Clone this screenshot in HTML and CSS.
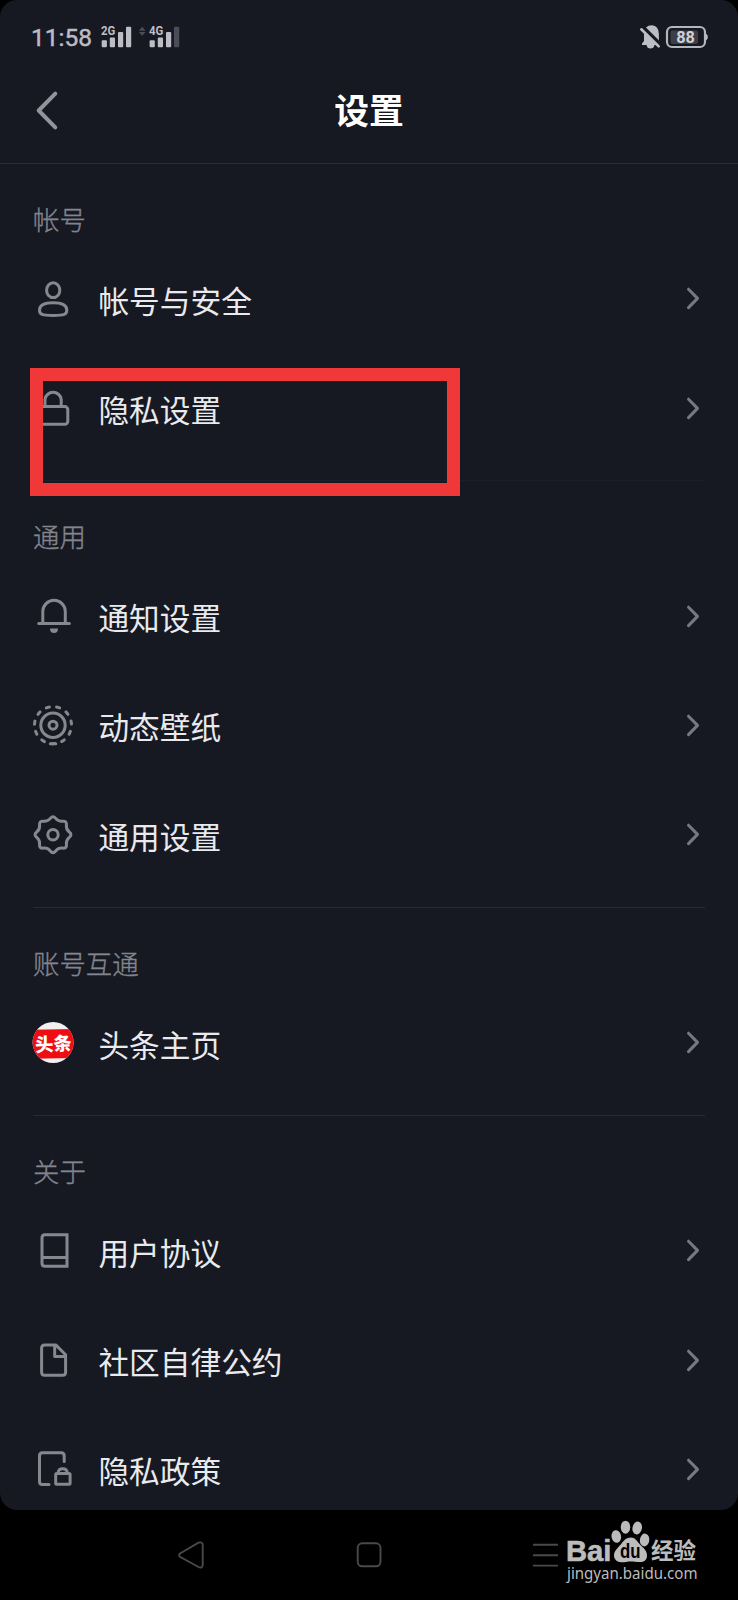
FILE: index.html
```html
<!DOCTYPE html>
<html lang="zh-CN">
<head>
<meta charset="utf-8">
<title>设置</title>
<link rel="stylesheet" href="styles.css">
</head>
<body>
<svg class="defs" width="0" height="0">
  <symbol id="chevron" viewBox="0 0 20 28"><path d="M3.5 4.2 12.5 13.4 3.5 22.6"/></symbol>
</svg>
<div class="phone">
  <div class="screen">
    <div class="status">
      <span class="clock">11:58</span>
      <svg class="signal" width="84" height="26" viewBox="99 24 84 26">
        <g class="solid">
          <rect x="101.7" y="40.3" width="5.2" height="7" rx="1"/><rect x="109.8" y="37.5" width="5.2" height="9.8" rx="1"/><rect x="118" y="32" width="5.2" height="15.3" rx="1"/><rect x="126" y="26.7" width="5.2" height="20.6" rx="1"/>
          <rect x="149.6" y="40.3" width="5.2" height="7" rx="1"/><rect x="157.8" y="37.5" width="5.2" height="9.8" rx="1"/><rect x="166" y="32" width="5.2" height="15.3" rx="1"/>
          <text x="101" y="35.3" textLength="14.3" lengthAdjust="spacingAndGlyphs">2G</text>
          <text x="149" y="35.3" textLength="14.3" lengthAdjust="spacingAndGlyphs">4G</text>
        </g>
        <g class="dim"><rect x="174" y="26.7" width="5.2" height="20.6" rx="1"/><path d="M138.8 30.7 142.2 26.8 145.6 30.7ZM138.8 32 142.2 35.8 145.6 32Z"/></g>
      </svg>
      <svg class="power" width="70" height="28" viewBox="638 23 70 28">
        <path class="solid" d="M642 45V43.5L644 41V34Q644 25.5 652 25.3Q658.7 25.8 658.9 34V41L661 44V45H654.5Q653.8 48.5 650.5 48.5T646.5 45Z"/>
        <path class="slash-gap" d="M642 26 661 45"/>
        <path class="slash" d="M641.3 29.3 658.7 46.4"/>
        <rect class="cell" x="667" y="27" width="38" height="20" rx="5"/>
        <path class="solid" d="M706 34h.5q1.3 1 1.3 3t-1.3 3H706z"/>
        <rect class="charge" x="670.5" y="30.5" width="27.5" height="13.5" rx="2"/>
        <text class="percent" x="676.2" y="43" textLength="18.7" lengthAdjust="spacingAndGlyphs">88</text>
      </svg>
    </div>
    <header class="titlebar">
      <svg class="back" width="26" height="42" viewBox="34 90 26 42"><path d="M55.3 93.7 38.7 110.5 55.3 127.3"/></svg>
      <h1>设置</h1>
    </header>
    <main>
      <section class="group faint">
        <h2>帐号</h2>
        <div class="row">
          <svg class="icon" viewBox="0 0 44 44"><ellipse cx="22.2" cy="13.2" rx="6.6" ry="7.4"/><path d="M22.2 25.8C28 25.8 35.8 27 35.8 33.2C35.8 37.5 33.5 38.5 22.2 38.5S8.5 37.5 8.5 33.2C8.5 27 16.4 25.8 22.2 25.8Z"/></svg>
          <span>帐号与安全</span><svg class="arrow"><use href="#chevron"/></svg>
        </div>
        <div class="row">
          <svg class="icon" viewBox="0 0 44 44"><path d="M14 19V12.2A8.2 8.2 0 0 1 30.2 12.2V19"/><rect x="8" y="19.6" width="28.8" height="17.7" rx="3"/></svg>
          <span>隐私设置</span><svg class="arrow"><use href="#chevron"/></svg>
          <div class="highlight"></div>
        </div>
      </section>
      <section class="group">
        <h2>通用</h2>
        <div class="row">
          <svg class="icon" viewBox="0 0 44 44"><path d="M7.7 28.6H38.4M11.8 28V16.6A11.2 11.2 0 0 1 34.3 16.6V28"/><path class="fill" d="M19 33.5H27Q27 38 23 38T19 33.5Z"/></svg>
          <span>通知设置</span><svg class="arrow"><use href="#chevron"/></svg>
        </div>
        <div class="row">
          <svg class="icon" viewBox="0 0 44 44"><circle cx="22" cy="21.2" r="12.2"/><circle cx="22" cy="21.2" r="4"/><circle class="dashes" cx="22" cy="21.2" r="18.5" pathLength="110" transform="rotate(85 22 21.2)"/><path d="M19.3 39.7H24.8"/></svg>
          <span>动态壁纸</span><svg class="arrow"><use href="#chevron"/></svg>
        </div>
        <div class="row">
          <svg class="icon" viewBox="-22 -21.7 44 44"><path d="M-2.68-16.27Q0-19.6 2.68-16.27Q5.36-12.93 9.63-13.41Q13.9-13.9 13.41-9.63Q12.93-5.36 16.27-2.68Q19.6 0 16.27 2.68Q12.93 5.36 13.41 9.63Q13.9 13.9 9.63 13.41Q5.36 12.93 2.68 16.27Q0 19.6-2.68 16.27Q-5.36 12.93-9.63 13.41Q-13.9 13.9-13.41 9.63Q-12.93 5.36-16.27 2.68Q-19.6 0-16.27-2.68Q-12.93-5.36-13.41-9.63Q-13.9-13.9-9.63-13.41Q-5.36-12.93-2.68-16.27Z"/><circle r="5.2"/></svg>
          <span>通用设置</span><svg class="arrow"><use href="#chevron"/></svg>
        </div>
      </section>
      <section class="group">
        <h2>账号互通</h2>
        <div class="row">
          <svg class="icon" viewBox="0 0 44 44"><clipPath id="disc"><circle cx="22.1" cy="21.5" r="20.5"/></clipPath><g clip-path="url(#disc)"><rect class="paper" width="44" height="44"/><rect class="red" y="8.3" width="44" height="29" transform="rotate(-1 22 22)"/></g><text class="logo" x="4" y="29.8" textLength="36.5" lengthAdjust="spacingAndGlyphs" transform="rotate(-3 22 22)">头条</text></svg>
          <span>头条主页</span><svg class="arrow"><use href="#chevron"/></svg>
        </div>
      </section>
      <section class="group last">
        <h2>关于</h2>
        <div class="row">
          <svg class="icon" viewBox="0 0 44 44"><path class="miter" d="M14 5.8H36V37.3H14Q11 37.3 11 34.3V8.8Q11 5.8 14 5.8ZM11.5 28.6H35.5"/></svg>
          <span>用户协议</span><svg class="arrow"><use href="#chevron"/></svg>
        </div>
        <div class="row">
          <svg class="icon" viewBox="0 0 44 44"><path d="M13.6 6.1H25L34.6 15.7V33.2Q34.6 36.3 31.6 36.3H13.6Q10.6 36.3 10.6 33.2V9.1Q10.6 6.1 13.6 6.1ZM23.7 6.7V17.4H34.2"/></svg>
          <span>社区自律公约</span><svg class="arrow"><use href="#chevron"/></svg>
        </div>
        <div class="row">
          <svg class="icon" viewBox="0 0 44 44"><path d="M18 36.4H11.5Q8.5 36.4 8.5 33.4V7.8Q8.5 4.8 11.5 4.8H30.2Q33.2 4.8 33.2 7.8V13.6M27.2 25Q27.2 20.8 31.7 20.8T36.2 25"/><rect x="24.7" y="25.4" width="14.4" height="10.8" rx="1"/></svg>
          <span>隐私政策</span><svg class="arrow"><use href="#chevron"/></svg>
        </div>
      </section>
    </main>
  </div>
  <nav class="navbar">
    <svg viewBox="0 1510 738 90">
      <path d="M180 1553.5 198.5 1542.7Q202.5 1541.5 202.7 1545V1565Q202.3 1568.7 198.5 1567L180 1556.8Q178.3 1555 180 1553.5Z"/>
      <rect x="357.7" y="1543.3" width="22.8" height="23" rx="4.5"/>
      <path d="M533 1544.8H558M533 1555.2H558M533 1565.6H558"/>
    </svg>
    <div class="watermark">
      <svg width="140" height="72" viewBox="562 1518 140 72">
        <ellipse cx="616.3" cy="1536.5" rx="4.8" ry="6.4" transform="rotate(-10 616.3 1536.5)"/><ellipse cx="625.5" cy="1527.2" rx="4.7" ry="6.5"/><ellipse cx="637.2" cy="1528" rx="4.7" ry="6.5" transform="rotate(12 637.2 1528)"/><ellipse cx="644.6" cy="1540" rx="4.7" ry="6.4" transform="rotate(8 644.6 1540)"/>
        <path d="M631 1537.5C635 1537.5 637 1541 640 1544.5C644 1548.5 647.3 1551 647 1556C646.8 1560.5 643.5 1562.3 639.5 1562.1C636 1562 634 1561.5 630.5 1561.5S624 1562.5 621 1562.2C616.5 1562 614 1559 614 1555.5C614 1550.5 618.5 1547.5 621.5 1543.5C624 1540.3 626.5 1537.5 631 1537.5Z"/>
        <text class="brand" x="566" y="1561.3" textLength="45.5" lengthAdjust="spacingAndGlyphs">Bai</text>
        <text class="du" x="620" y="1558.3" textLength="20.5" lengthAdjust="spacingAndGlyphs">du</text>
        <text class="brand-cn" x="651" y="1559.3" textLength="45" lengthAdjust="spacingAndGlyphs">经验</text>
        <text class="site" x="567" y="1578.8" textLength="130.5" lengthAdjust="spacingAndGlyphs">jingyan.baidu.com</text>
      </svg>
    </div>
  </nav>
</div>
</body>
</html>
```
FILE: styles.css
```css
* { box-sizing: border-box; }
body { margin: 0; background: #000; font-family: "Noto Sans CJK SC", sans-serif; }
svg { display: block; flex: none; overflow: visible; }
.defs { position: absolute; }
.phone { width: 738px; height: 1600px; display: flex; flex-direction: column; overflow: hidden; }
.screen { height: 1510px; background: #161822; border-radius: 17px; overflow: hidden; }

.status { height: 74px; padding: 0 30px 0 31px; display: flex; align-items: center; }
.clock { width: 68px; padding-top: 2px; color: #bbbcc3; font: 400 24.5px/28px Roboto, sans-serif; -webkit-text-stroke: .5px #bbbcc3; }
.power { margin-left: auto; }
.solid { fill: #bdbec5; }
.solid text { font: 700 12.5px Roboto, sans-serif; }
.dim { fill: #4b4c57; }
.slash-gap { stroke: #161822; stroke-width: 3.5; }
.slash { stroke: #bdbec5; stroke-width: 2.6; stroke-linecap: round; }
.cell { fill: none; stroke: #b4b6bd; stroke-width: 2.2; }
.charge { fill: #3d3f48; }
.percent { fill: #d0d1d6; font: 700 17px Roboto, sans-serif; }

.titlebar { height: 90px; display: grid; grid-template-columns: 1fr auto 1fr; align-items: center; padding: 0 34px 16px; border-bottom: 1px solid #2a2c36; }
.back { fill: none; stroke: #92949c; stroke-width: 4; stroke-linecap: round; stroke-linejoin: round; }
h1 { margin: 0; padding-bottom: 3px; color: #fff; font-size: 34.8px; line-height: 48px; font-weight: 700; }

.group { margin: 0 33px; padding-bottom: 17px; border-bottom: 1px solid #282a33; }
.faint { border-bottom-color: #1c1e28; }
.last { border-bottom: 0; }
h2 { margin: 0; height: 80.67px; padding-top: 36px; color: #83858d; font-size: 26.4px; line-height: 38px; font-weight: 300; -webkit-text-stroke: .35px #83858d; }
.row { position: relative; height: 109.33px; display: flex; align-items: center; }
.row span { flex: 1; margin-left: 23.4px; padding-top: 1px; color: #e9eaed; font-size: 30.7px; line-height: 44px; font-weight: 400; }
.icon { width: 44px; height: 44px; margin-left: -2px; fill: none; stroke: #868890; stroke-width: 3; stroke-linecap: round; stroke-linejoin: round; }
.icon .fill { fill: #868890; stroke: none; }
.icon .miter { stroke-linejoin: miter; }
.dashes { stroke-dasharray: 3 7; }
.icon .paper { fill: #f5f0f0; stroke: none; }
.icon .red { fill: #ee0d13; stroke: none; }
.icon .logo { fill: #fff; stroke: none; font-size: 18.5px; font-weight: 900; }
.arrow { width: 20px; height: 28px; fill: none; stroke: #777982; stroke-width: 3; stroke-linecap: round; stroke-linejoin: round; }
.highlight { position: absolute; left: -3.5px; top: 14.5px; width: 430.5px; height: 128px; border: 13px solid #f03838; }

.navbar { position: relative; height: 90px; }
.navbar > svg { width: 738px; height: 90px; fill: none; stroke: #48494b; stroke-width: 1.9; }
.watermark { position: absolute; left: 562px; top: 8px; fill: #bcbcbc; }
.brand { font: 700 29px "Liberation Sans", sans-serif; stroke: #bcbcbc; stroke-width: .6; }
.du { fill: #000; font: 700 20px "Liberation Sans", sans-serif; }
.brand-cn { font-size: 23px; font-weight: 700; }
.site { font: 400 16.5px "Noto Sans", sans-serif; }
```
